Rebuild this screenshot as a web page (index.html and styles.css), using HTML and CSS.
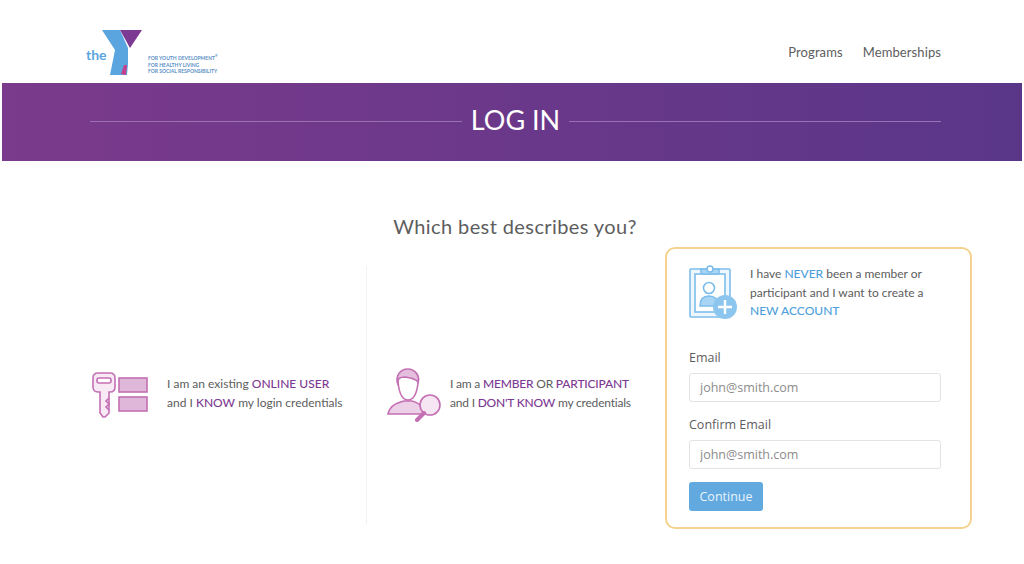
FILE: index.html
```html
<!DOCTYPE html>
<html>
	<head>
		<meta charset="utf-8">
		<title>Log In</title>
		<link rel="stylesheet" href="styles.css">
	</head>
	<body>
		<div class="header">
			<div class="logo">
				<span class="logoThe">the</span>
				<svg class="logoMark" width="42" height="48" viewBox="0 0 42 48">
					<path d="M0 1H18L26 19V35L25 46H8L13 21Z" fill="#5aa5e0"/>
					<path d="M18 1H40L28 19Z" fill="#7d3a92"/>
					<path d="M19 45L22 36H25L24 46Z" fill="#c2408c"/>
				</svg>
				<div class="tagline">
					<div>FOR YOUTH DEVELOPMENT<sup>®</sup></div>
					<div>FOR HEALTHY LIVING</div>
					<div>FOR SOCIAL RESPONSIBILITY</div>
				</div>
			</div>
			<div class="nav">
				<a>Programs</a>
				<a>Memberships</a>
			</div>
		</div>

		<div class="banner">
			<span class="bannerRule"></span>
			<h1>LOG IN</h1>
			<span class="bannerRule"></span>
		</div>

		<div class="question">Which best describes you?</div>

		<div class="choices">
			<div class="choice choiceUser">
				<svg width="56" height="46" viewBox="0 0 56 46" fill="none" stroke="#c46fb4" stroke-width="1.6">
					<path d="M6 1H18Q23 1 23 6V15Q23 20 18 20H17V41L13 45H11L8 41V20H6Q1 20 1 15V6Q1 1 6 1Z" fill="#f8eaf5"/>
					<rect x="5" y="6" width="14" height="5" rx="2" fill="#fff"/>
					<path d="M17 26L14 29L17 32L14 35L17 38" />
					<rect x="27" y="6" width="28" height="14" fill="#dfb7d8"/>
					<rect x="27" y="25" width="28" height="14" fill="#dfb7d8"/>
				</svg>
				<p>I am an existing <b class="purple">ONLINE USER</b><br>and I <b class="purple">KNOW</b> my login credentials</p>
			</div>
			<div class="choiceRule"></div>
			<div class="choice choiceMember">
				<svg width="54" height="54" viewBox="0 0 54 54" fill="none" stroke="#c46fb4" stroke-width="1.6">
					<path d="M1 46C3 37 10 35 17 33H25C29 34 31 35 33 37L37 46Z" fill="#ecd0e7"/>
					<path d="M11 14C9 7 14 2 21 2C28 2 33 7 31 15C30 24 27 32 21 32C15 32 12 24 11 14Z" fill="#fff"/>
					<path d="M11 17C10 10 13 9 18 9C23 10 28 10 31 14C33 8 28 1 21 1C13 1 8 8 11 17Z" fill="#e4bfdd"/>
					<circle cx="43" cy="37" r="10" fill="#f6e6f3"/>
					<path d="M37 45L30 52" stroke-width="4" stroke-linecap="round"/>
				</svg>
				<p class="tight">I am a <b class="purple">MEMBER</b> OR <b class="purple">PARTICIPANT</b><br>and I <b class="purple">DON'T KNOW</b> my credentials</p>
			</div>
			<div class="card">
				<div class="cardTop">
					<svg width="50" height="56" viewBox="0 0 50 56" fill="none" stroke="#7cbdec" stroke-width="1.6">
						<rect x="1" y="4" width="40" height="48" rx="1" fill="#eef7fe"/>
						<rect x="6" y="9" width="30" height="38" fill="#fff"/>
						<path d="M12 4H30V7Q30 9 28 9H14Q12 9 12 7Z" fill="#a9d5f5"/>
						<circle cx="21" cy="4" r="3" fill="#fff"/>
						<circle cx="20" cy="23" r="5.5" fill="#fff"/>
						<path d="M11 41C11 34 15 31 20 31C25 31 29 34 30 41Z" fill="#a9d5f5"/>
						<circle cx="36" cy="42" r="12" fill="#8cc6ef" stroke="none"/>
						<path d="M36 35V49M29 42H43" stroke="#fff" stroke-width="2.4"/>
					</svg>
					<p>I have <b class="blue">NEVER</b> been a member or participant and I want to create a <b class="blue">NEW ACCOUNT</b></p>
				</div>
				<label class="fieldLabel">Email</label>
				<input class="field" type="text" placeholder="john@smith.com">
				<label class="fieldLabel">Confirm Email</label>
				<input class="field" type="text" placeholder="john@smith.com">
				<button class="continueBtn">Continue</button>
			</div>
		</div>
	</body>
</html>
```

FILE: styles.css
```css
html, body {
	margin: 0;
	height: 564px;
	overflow: hidden;
	background: #fff;
	font-family: "Lato", sans-serif;
	color: #5d5d5d;
}

.header {
	height: 83px;
	display: flex;
	justify-content: space-between;
	padding: 0 83px 0 86px;
}

.logo {
	display: flex;
	padding-top: 28px;
	height: 55px;
	box-sizing: border-box;
}

.logoThe {
	font-size: 14px;
	font-weight: bold;
	color: #5aa5e0;
	margin-top: 18px;
	width: 16px;
}

.logoMark {
	display: block;
	flex: none;
	margin-top: 1px;
}

.tagline {
	margin: 27px 0 0 4px;
	font-size: 5px;
	line-height: 6.5px;
	font-weight: bold;
	color: #5b90c6;
	white-space: nowrap;
}

.tagline sup {
	font-size: 3px;
	line-height: 0;
}

.nav {
	display: flex;
	gap: 20px;
	padding-top: 44px;
	font-size: 13px;
	line-height: 16px;
	letter-spacing: 0.1px;
}

.banner {
	margin: 0 2px;
	height: 78px;
	padding: 0 81px 2px 88px;
	box-sizing: border-box;
	display: flex;
	align-items: center;
	gap: 9px;
	background: linear-gradient(90deg, #7b3a8b, #5a3689);
}

.banner h1 {
	margin: 0 0 4px;
	font-size: 27px;
	font-weight: normal;
	color: #fff;
}

.bannerRule {
	flex: 1;
	height: 1px;
	background: #9a72b4;
}

.question {
	margin-top: 52px;
	padding-left: 6px;
	text-align: center;
	font-size: 20px;
	line-height: 26px;
	letter-spacing: 0.4px;
}

.choices {
	display: flex;
	align-items: center;
	margin: 8px 0 0 92px;
	width: 879px;
}

.choice {
	display: flex;
	flex: none;
	align-items: center;
	font-size: 12px;
	line-height: 19px;
	white-space: nowrap;
	margin-top: 13px;
}

.choice svg, .cardTop svg {
	flex: none;
}

.choice p, .cardTop p {
	margin: 0;
}

.choice p {
	margin-bottom: 4px;
}

.choice p.tight {
	letter-spacing: -0.2px;
}

.choiceUser {
	width: 274px;
	gap: 19px;
}

.choiceMember {
	width: 298px;
	padding-left: 20px;
	gap: 9px;
	box-sizing: border-box;
}

.choiceRule {
	flex: none;
	width: 1px;
	height: 258px;
	margin-top: 13px;
	background: #f1f1f1;
}

.purple {
	color: #7d3a92;
	font-weight: 500;
}

.blue {
	color: #4f9fdc;
	font-weight: 500;
}

.card {
	flex: none;
	width: 307px;
	height: 282px;
	box-sizing: border-box;
	padding: 16px 29px 0 22px;
	border: 2px solid #f5d38f;
	border-radius: 10px;
	font-family: "Open Sans", sans-serif;
}

.cardTop {
	display: flex;
	gap: 11px;
	height: 77px;
	font-family: "Lato", sans-serif;
	font-size: 12px;
	line-height: 18.5px;
}

.fieldLabel {
	display: block;
	margin: 7px 0 6px;
	font-size: 12.5px;
	line-height: 18px;
}

.field {
	display: block;
	width: 100%;
	height: 29px;
	box-sizing: border-box;
	padding: 0 10px;
	border: 1px solid #e3e3e3;
	border-radius: 3px;
	font-family: "Open Sans", sans-serif;
	font-size: 12.5px;
	margin-bottom: 14px;
}

.field::placeholder {
	color: #8c8c8c;
}

.continueBtn {
	display: block;
	width: 74px;
	height: 29px;
	margin-top: -1px;
	padding: 0;
	border: 0;
	border-radius: 3px;
	background: #62a9e0;
	color: #e9f4fc;
	font-family: "Open Sans", sans-serif;
	font-size: 12.5px;
}
```
